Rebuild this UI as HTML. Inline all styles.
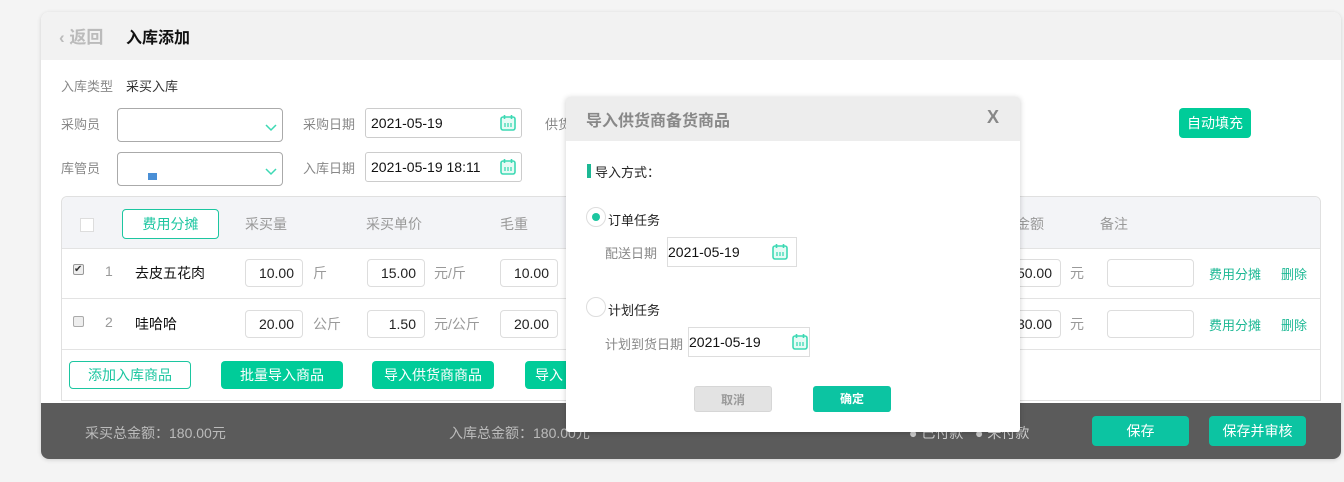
<!DOCTYPE html>
<html><head><meta charset="utf-8"><style>
*{box-sizing:border-box;margin:0;padding:0}
body{width:1344px;height:482px;background:#f4f4f4;font-family:"Liberation Sans","Noto Sans CJK SC",sans-serif;font-size:13px;color:#333;position:relative;overflow:hidden}
.a{position:absolute}
.card{left:41px;top:12px;width:1300px;height:447px;background:#fff;border-radius:8px;box-shadow:0 1px 4px rgba(0,0,0,.15);overflow:hidden}
.lbl{color:#888;font-size:13px}
.inp{border:1px solid #ccc;border-radius:3px;background:#fff}
.cal{width:16px;height:17px}
.btn{background:#00cc99;color:#fff;border-radius:4px;text-align:center;font-size:14px}
.obtn{border:1px solid #1cc6a0;color:#1cc6a0;border-radius:4px;text-align:center;font-size:14px;background:#fff}
.hl{background:#e3e3e3;height:1px}
.num{border:1px solid #ddd;border-radius:4px;text-align:right;padding-right:8px;font-size:14px;height:28px;line-height:26px;color:#222}
.gr{color:#999;font-size:14px}
.tl{color:#1cb894;font-size:13px}
</style></head><body>
<svg width="0" height="0" style="position:absolute"><defs><symbol id="cal" viewBox="0 0 16 17"><rect x="1" y="3" width="14" height="13" rx="2" fill="#e6fbf5" stroke="#3dd9b4" stroke-width="1.6"/><path d="M4.5 1v4M11.5 1v4" stroke="#3dd9b4" stroke-width="1.6"/><path d="M5 9v4M8 9v4M11 9v4" stroke="#3dd9b4" stroke-width="1.3"/></symbol><symbol id="chev" viewBox="0 0 12 8"><path d="M1 1l5 5 5-5" fill="none" stroke="#3dd9b4" stroke-width="1.5"/></symbol></defs></svg>
<div class="a card">
 <div class="a" style="left:0;top:0;width:1300px;height:48px;background:#f2f2f2"></div>
 <div class="a" style="left:18px;top:11px;font-size:17px;color:#bbb;font-weight:bold">‹ 返回</div>
 <div class="a" style="left:85px;top:12px;font-size:16px;color:#111;font-weight:bold">入库添加</div>
 <div class="a lbl" style="left:20px;top:64px">入库类型</div>
 <div class="a" style="left:85px;top:64px">采买入库</div>
 <div class="a lbl" style="left:20px;top:102px">采购员</div>
 <div class="a inp" style="left:76px;top:96px;width:166px;height:34px;border-color:#aaa;border-radius:4px"><svg class="a" style="right:5px;top:15px" width="12" height="8"><use href="#chev"/></svg></div>
 <div class="a lbl" style="left:20px;top:146px">库管员</div>
 <div class="a inp" style="left:76px;top:140px;width:166px;height:34px;border-color:#aaa;border-radius:4px"><span class="a" style="left:30px;top:20px;width:9px;height:7px;background:#4a8fd6"></span><svg class="a" style="right:5px;top:15px" width="12" height="8"><use href="#chev"/></svg></div>
 <div class="a lbl" style="left:262px;top:102px">采购日期</div>
 <div class="a inp" style="left:324px;top:96px;width:157px;height:30px;font-size:14px;padding:6px 5px;color:#111">2021-05-19<svg class="a cal" style="right:5px;top:5px"><use href="#cal"/></svg></div>
 <div class="a lbl" style="left:262px;top:146px">入库日期</div>
 <div class="a inp" style="left:324px;top:140px;width:157px;height:30px;font-size:14px;padding:6px 5px;color:#111">2021-05-19 18:11<svg class="a cal" style="right:5px;top:5px"><use href="#cal"/></svg></div>
 <div class="a lbl" style="left:504px;top:102px">供货</div>
 <div class="a btn" style="left:1138px;top:96px;width:72px;height:30px;line-height:30px">自动填充</div>
 <div class="a" style="left:20px;top:184px;width:1260px;height:205px;border:1px solid #e0e0e0;border-radius:6px 6px 0 0"></div>
 <div class="a" style="left:21px;top:185px;width:1258px;height:51px;background:#f3f4f7;border-radius:6px 6px 0 0"></div>
 <div class="a" style="left:39px;top:206px;width:14px;height:14px;border:1px solid #ddd;background:#fff"></div>
 <div class="a obtn" style="left:81px;top:197px;width:97px;height:30px;line-height:28px">费用分摊</div>
 <div class="a gr" style="left:204px;top:202px">采买量</div>
 <div class="a gr" style="left:325px;top:202px">采买单价</div>
 <div class="a gr" style="left:459px;top:202px">毛重</div>
 <div class="a gr" style="left:975px;top:202px">金额</div>
 <div class="a gr" style="left:1059px;top:202px">备注</div>
 <div class="a hl" style="left:21px;top:236px;width:1258px"></div>
 <div class="a hl" style="left:21px;top:286px;width:1258px"></div>
 <div class="a hl" style="left:21px;top:337px;width:1258px"></div>
 <div class="a" style="left:32px;top:252px;width:11px;height:11px;border:1px solid #999;border-radius:2px;background:#eee;font-size:10px;line-height:9px">✔</div>
 <div class="a gr" style="left:64px;top:251px">1</div>
 <div class="a" style="left:94px;top:251px;font-size:14px;color:#111">去皮五花肉</div>
 <div class="a num" style="left:204px;top:247px;width:58px">10.00</div><div class="a gr" style="left:272px;top:251px">斤</div>
 <div class="a num" style="left:326px;top:247px;width:58px">15.00</div><div class="a gr" style="left:393px;top:251px">元/斤</div>
 <div class="a num" style="left:459px;top:247px;width:58px">10.00</div>
 <div class="a num" style="left:960px;top:247px;width:60px">50.00</div><div class="a gr" style="left:1029px;top:251px">元</div>
 <div class="a num" style="left:1066px;top:247px;width:87px"></div>
 <div class="a tl" style="left:1168px;top:252px">费用分摊</div><div class="a tl" style="left:1240px;top:252px">删除</div>
 <div class="a" style="left:32px;top:304px;width:11px;height:11px;border:1px solid #aaa;border-radius:2px;background:#eee"></div>
 <div class="a gr" style="left:64px;top:302px">2</div>
 <div class="a" style="left:94px;top:302px;font-size:14px;color:#111">哇哈哈</div>
 <div class="a num" style="left:204px;top:298px;width:58px">20.00</div><div class="a gr" style="left:272px;top:302px">公斤</div>
 <div class="a num" style="left:326px;top:298px;width:58px">1.50</div><div class="a gr" style="left:393px;top:302px">元/公斤</div>
 <div class="a num" style="left:459px;top:298px;width:58px">20.00</div>
 <div class="a num" style="left:960px;top:298px;width:60px">30.00</div><div class="a gr" style="left:1029px;top:302px">元</div>
 <div class="a num" style="left:1066px;top:298px;width:87px"></div>
 <div class="a tl" style="left:1168px;top:303px">费用分摊</div><div class="a tl" style="left:1240px;top:303px">删除</div>
 <div class="a obtn" style="left:28px;top:349px;width:122px;height:28px;line-height:26px">添加入库商品</div>
 <div class="a btn" style="left:180px;top:349px;width:122px;height:28px;line-height:28px">批量导入商品</div>
 <div class="a btn" style="left:331px;top:349px;width:122px;height:28px;line-height:28px">导入供货商商品</div>
 <div class="a btn" style="left:484px;top:349px;width:60px;height:28px;line-height:28px;text-align:left;padding-left:10px">导入</div>
 <div class="a" style="left:0;top:391px;width:1300px;height:56px;background:#5b5b5b"></div>
 <div class="a" style="left:44px;top:411px;color:#bbb;font-size:14px">采买总金额：180.00元</div>
 <div class="a" style="left:408px;top:411px;color:#bbb;font-size:14px">入库总金额：180.00元</div>
 <div class="a" style="left:868px;top:411px;color:#ccc;font-size:14px">● 已付款 &nbsp; ● 未付款</div>
 <div class="a btn" style="left:1051px;top:404px;width:97px;height:30px;line-height:30px;background:#0cc4a2">保存</div>
 <div class="a btn" style="left:1168px;top:404px;width:97px;height:30px;line-height:30px;background:#0cc4a2">保存并审核</div>
</div>
<div class="a" style="left:566px;top:97px;width:454px;height:335px;background:#fff;border-radius:3px;overflow:hidden;box-shadow:0 1px 6px rgba(0,0,0,.2)">
 <div class="a" style="left:0;top:0;width:454px;height:44px;background:#ededed"></div>
 <div class="a" style="left:20px;top:10px;font-size:16px;font-weight:bold;color:#888">导入供货商备货商品</div>
 <div class="a" style="left:421px;top:10px;font-size:18px;font-weight:bold;color:#888">X</div>
 <div class="a" style="left:21px;top:67px;width:4px;height:14px;background:#1cb894"></div>
 <div class="a" style="left:29px;top:65px;font-size:13px;color:#222">导入方式：</div>
 <div class="a" style="left:20px;top:110px;width:20px;height:20px;border:1px solid #ddd;border-radius:50%"><div class="a" style="left:5px;top:5px;width:8px;height:8px;border-radius:50%;background:#1cc6a0"></div></div>
 <div class="a" style="left:42px;top:113px;font-size:13px;color:#222">订单任务</div>
 <div class="a lbl" style="left:39px;top:146px">配送日期</div>
 <div class="a" style="left:101px;top:140px;width:130px;height:30px;border:1px solid #ddd;font-size:14px;padding:6px 0;color:#111">2021-05-19<svg class="a cal" style="right:8px;top:5px"><use href="#cal"/></svg></div>
 <div class="a" style="left:20px;top:200px;width:20px;height:20px;border:1px solid #ddd;border-radius:50%"></div>
 <div class="a" style="left:42px;top:203px;font-size:13px;color:#222">计划任务</div>
 <div class="a lbl" style="left:39px;top:237px">计划到货日期</div>
 <div class="a" style="left:122px;top:230px;width:122px;height:30px;border:1px solid #ddd;font-size:14px;padding:6px 0;color:#111">2021-05-19<svg class="a cal" style="right:1px;top:5px"><use href="#cal"/></svg></div>
 <div class="a" style="left:128px;top:289px;width:78px;height:26px;line-height:26px;background:#e3e3e3;border:1px solid #d6d6d6;border-radius:3px;text-align:center;font-size:12px;color:#999;font-weight:bold">取消</div>
 <div class="a" style="left:247px;top:289px;width:78px;height:26px;line-height:26px;background:#0cc4a2;border-radius:3px;text-align:center;font-size:12px;color:#fff;font-weight:bold">确定</div>
</div>
</body></html>
